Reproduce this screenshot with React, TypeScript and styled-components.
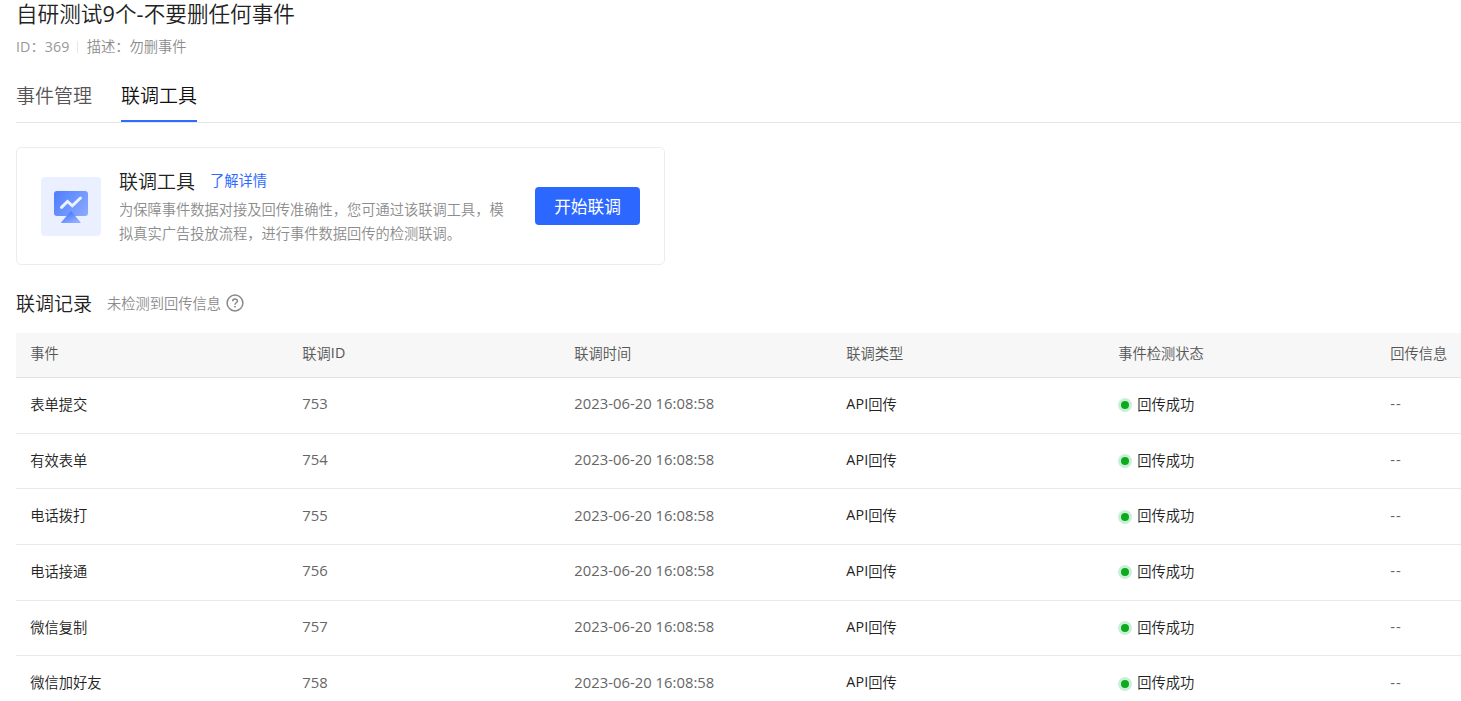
import styled, { createGlobalStyle } from 'styled-components'

interface DebugRecord {
  id: number
  event: string
  time: string
  status: string
  info: string
}

const events = ['表单提交', '有效表单', '电话拨打', '电话接通', '微信复制', '微信加好友']

const records: DebugRecord[] = events.map((event, i) => ({
  id: 753 + i,
  event,
  time: '2023-06-20 16:08:58',
  status: '回传成功',
  info: '--',
}))

function BoardIcon() {
  return (
    <svg width="34" height="33" viewBox="0 0 34 33" fill="none">
      <defs>
        <linearGradient id="screen" x1="0" y1="0" x2="34" y2="25" gradientUnits="userSpaceOnUse">
          <stop stopColor="#4C7CFF" />
          <stop offset="1" stopColor="#8BABFF" />
        </linearGradient>
        <linearGradient id="stand" x1="17" y1="20" x2="22" y2="32" gradientUnits="userSpaceOnUse">
          <stop stopColor="#4376FF" />
          <stop offset="1" stopColor="#8FADFF" />
        </linearGradient>
      </defs>
      <rect y="1" width="34" height="25" rx="3" fill="url(#screen)" />
      <path d="M17 21 26.5 32.2a.5.5 0 0 1-.4.8H7.6a.5.5 0 0 1-.4-.8Z" fill="url(#stand)" />
      <path d="M7.5 17.3 13.5 11.5 18.3 15.8 26.5 8" stroke="#EDF2FF" strokeWidth="3" strokeLinecap="round" />
    </svg>
  )
}

function HelpIcon() {
  return (
    <svg width="18" height="18" viewBox="0 0 18 18" fill="none" stroke="#888" strokeWidth="1.5">
      <circle cx="9" cy="9" r="7.9" />
      <path d="M6.6 7.3C6.6 5.8 7.6 4.9 9 4.9s2.4.9 2.4 2.2c0 1.6-2.4 1.8-2.4 3.7" />
      <path d="M9 11.9v1.6" strokeWidth="1.6" />
    </svg>
  )
}

export default function App() {
  return (
    <Page>
      <GlobalStyle />
      <Title>
        自研测试<Latin>9</Latin>个<Latin>-</Latin>不要删任何事件
      </Title>
      <Meta>
        <MetaId>ID：369</MetaId>
        <MetaDivider />
        <span>描述：勿删事件</span>
      </Meta>

      <Tabs>
        <Tab>事件管理</Tab>
        <Tab $active>联调工具</Tab>
      </Tabs>

      <ToolCard>
        <IconBox>
          <BoardIcon />
        </IconBox>
        <ToolBody>
          <ToolHeading>
            <ToolName>联调工具</ToolName>
            <DetailLink>了解详情</DetailLink>
          </ToolHeading>
          <ToolDesc>
            为保障事件数据对接及回传准确性，您可通过该联调工具，模
            <br />
            拟真实广告投放流程，进行事件数据回传的检测联调。
          </ToolDesc>
        </ToolBody>
        <StartButton>开始联调</StartButton>
      </ToolCard>

      <SectionHeader>
        <SectionTitle>联调记录</SectionTitle>
        <SectionHint>未检测到回传信息</SectionHint>
        <HelpIcon />
      </SectionHeader>

      <Table>
        <HeadRow>
          <HeadCell>事件</HeadCell>
          <HeadCell>
            联调<Latin>ID</Latin>
          </HeadCell>
          <HeadCell>联调时间</HeadCell>
          <HeadCell>联调类型</HeadCell>
          <HeadCell>事件检测状态</HeadCell>
          <HeadCell>回传信息</HeadCell>
        </HeadRow>
        {records.map(record => (
          <Row key={record.id}>
            <Cell>{record.event}</Cell>
            <NumberCell>{record.id}</NumberCell>
            <NumberCell>{record.time}</NumberCell>
            <Cell>
              <Latin>API</Latin>回传
            </Cell>
            <Cell>
              <StatusDot />
              {record.status}
            </Cell>
            <InfoCell>{record.info}</InfoCell>
          </Row>
        ))}
      </Table>
    </Page>
  )
}

const GlobalStyle = createGlobalStyle`
  * {
    box-sizing: border-box;
  }

  body {
    margin: 0;
    background: #fff;
    font-family: 'Open Sans', 'Noto Sans CJK SC', sans-serif;
    font-size: 14.25px;
    font-weight: 350;
    color: #222;
  }
`

const Page = styled.div`
  height: 701px;
  padding-left: 16px;
  overflow: hidden;
  white-space: nowrap;
`

const Latin = styled.span`
  font-weight: 400;
  letter-spacing: 0.2px;
`

const Title = styled.h1`
  margin: 0;
  height: 30px;
  line-height: 28px;
  font-size: 21.6px;
  font-weight: inherit;
`

const Meta = styled.div`
  display: flex;
  align-items: center;
  height: 30px;
  color: #8c8c8c;
`

const MetaId = styled.span`
  font-weight: 400;
  letter-spacing: 0.1px;
  color: #999;
`

const MetaDivider = styled.i`
  width: 1px;
  height: 12px;
  margin: 3px 9px 0 7px;
  background: #e8e8e8;
`

const Tabs = styled.div`
  display: flex;
  gap: 29px;
  height: 63px;
  padding-top: 9px;
  border-bottom: 1px solid #e6e6e6;
`

const Tab = styled.div<{ $active?: boolean }>`
  height: 53px;
  line-height: 55px;
  font-size: 19px;
  color: ${({ $active }) => ($active ? '#111' : '#555')};
  border-bottom: 2px solid ${({ $active }) => ($active ? '#2f6bff' : 'transparent')};
`

const ToolCard = styled.section`
  display: flex;
  align-items: center;
  width: 649px;
  height: 118px;
  margin-top: 24px;
  padding: 0 24px;
  border: 1px solid #ededed;
  border-radius: 5px;
`

const IconBox = styled.div`
  display: flex;
  align-items: center;
  justify-content: center;
  width: 60px;
  height: 59px;
  border-radius: 4px;
  background: #eaf0ff;
`

const ToolBody = styled.div`
  margin: 0 0 1px 18px;
`

const ToolHeading = styled.div`
  display: flex;
  align-items: center;
  gap: 15px;
  height: 32px;
  padding-bottom: 2px;
`

const ToolName = styled.span`
  font-size: 19px;
`

const DetailLink = styled.a`
  padding-bottom: 2px;
  color: #2f6bff;
  font-weight: 400;
`

const ToolDesc = styled.p`
  margin: 0;
  line-height: 24px;
  color: #8c8c8c;
`

const StartButton = styled.button`
  width: 105px;
  height: 38px;
  margin-left: auto;
  padding: 0 0 1px;
  border: 0;
  border-radius: 4px;
  background: #2c68ff;
  color: #fff;
  font-family: inherit;
  font-size: 16.7px;
`

const SectionHeader = styled.div`
  display: flex;
  align-items: center;
  height: 68px;
  padding-top: 8px;
`

const SectionTitle = styled.h2`
  margin: 0;
  font-size: 19px;
  font-weight: inherit;
`

const SectionHint = styled.span`
  margin: 0 5px 0 15px;
  padding-bottom: 2px;
  color: #8c8c8c;
`

const Table = styled.div`
  display: flex;
  flex-direction: column;
`

const Row = styled.div`
  display: grid;
  grid-template-columns: repeat(5, 272px) 1fr;
  height: 55.7px;
  border-bottom: 1px solid #e9e9e9;
`

const HeadRow = styled(Row)`
  height: 45px;
  background: #f7f7f7;
  border-bottom-color: #e2e2e2;
  color: #555;
`

const Cell = styled.div`
  display: flex;
  align-items: center;
  padding: 0 0 4px 14.2px;
`

const HeadCell = styled(Cell)`
  padding-bottom: 5px;
`

const NumberCell = styled(Cell)`
  color: #666;
  font-size: 14.8px;
  font-weight: 400;
  letter-spacing: 0.03px;
`

const InfoCell = styled(NumberCell)`
  letter-spacing: 1px;
`

const StatusDot = styled.i`
  width: 14px;
  height: 14px;
  margin: 4px 5px 0 0;
  border: 3px solid #c9f0d6;
  border-radius: 50%;
  background: #0bab1b;
`
